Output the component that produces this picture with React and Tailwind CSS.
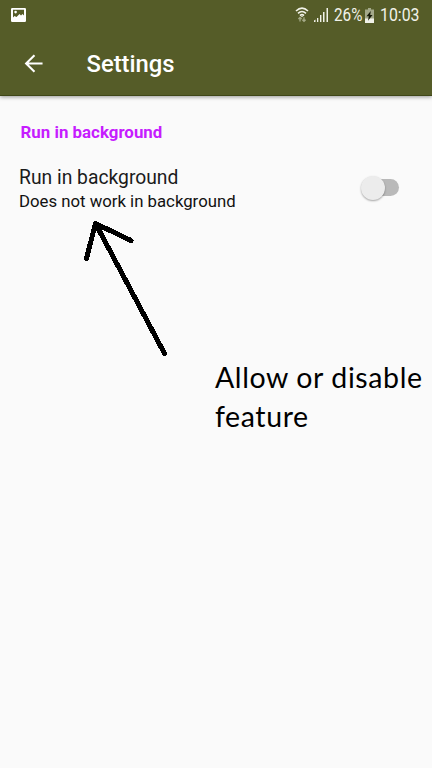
function StatusBar() {
  return (
    <div className="flex h-[30px] items-center text-[#f1f2e8]">
      <svg className="ml-[11px] h-[14px] w-[15px]" viewBox="0 0 15 14">
        <path fill="#fff" fillRule="evenodd" d="M1.2 0h12.6q1.2 0 1.2 1.2v11.6q0 1.2-1.2 1.2H1.2Q0 14 0 12.800V1.200Q0 0 1.200 0ZM2 1.800v7.700l1.500-1.500 2 1 3-3 1.500 1.500 1.500-1.500L13 7.500V1.800ZM4.600 2.800a1.300 1.300 0 1 1 0 2.600 1.300 1.300 0 1 1 0-2.600Z" />
      </svg>
      <svg className="ml-[269px] h-[16px] w-[14px]" viewBox="0 0 14 16" fill="none" stroke="#f1f2e8">
        <path strokeWidth="1.600" d="M1 4Q7-1.600 13 4M3 6.300Q7 2.700 11 6.300M5 8.600Q7 6.800 9 8.600" />
        <path fill="#f1f2e8" stroke="none" d="M5.800 8.900h2.400L7 10.300Z" />
        <path stroke="#a5aa88" strokeWidth="1.300" d="M5 14.500v-4M3.400 12 5 10.500 6.600 12M9 10.300v4M7.400 12.800 9 14.300l1.600-1.500" />
      </svg>
      <svg className="ml-[5px] h-[14px] w-[15px]" viewBox="0 0 15 14" fill="#f1f2e8">
        <path d="M0 12.500 1.500 11.500V14H0ZM3 10h1.300v4H3ZM6 7h1.400v7H6ZM9 4h1.500v10H9ZM12.500 0H14v14h-1.500Z" />
      </svg>
      <span className="ml-[4.500px] w-[29px] origin-left scale-x-[0.85] whitespace-nowrap text-[18px] leading-[30px]">26%</span>
      <svg className="ml-[2.500px] h-[15px] w-[9px]" viewBox="0 0 9 15">
        <path fill="#a4a98a" d="M3 0h3v1.500h3V15H0V1.500h3Z" />
        <path fill="#f1f2e8" d="M0 10.500h9V15H0Z" />
        <path fill="#161a08" d="M5.800 3 1.500 8.300h2.300L3 12.800 7.500 7H5.200Z" />
      </svg>
      <span className="ml-[6px] w-[40px] origin-left scale-x-[0.88] whitespace-nowrap text-[18px] leading-[30px]">10:03</span>
    </div>
  );
}

function Toggle() {
  return (
    <div className="mt-[14px] flex h-[17px] w-[36px] items-center rounded-full bg-[#b9b9b9]">
      <div className="-ml-[2px] size-[24px] shrink-0 rounded-full bg-[#ececec] shadow-[0_1px_2px_rgba(0,0,0,0.35)]" />
    </div>
  );
}

export default function App() {
  return (
    <div className="relative h-[768px] w-[432px] overflow-hidden bg-[#fafafa] font-['Roboto',sans-serif]">
      <header className="h-[96px] border-b border-[#3f4718] bg-[#555c28] shadow-[0_1px_4px_rgba(0,0,0,0.4)]">
        <StatusBar />
        <div className="flex h-[66px] items-center">
          <svg className="ml-[24px] h-[19px] w-[20px]" viewBox="0 0 20 20" fill="none" stroke="#fff" strokeWidth="2.200">
            <path d="M19 10H2M10.500 1.200 1.700 10l8.800 8.800" />
          </svg>
          <h1 className="ml-[42.500px] pt-[2px] text-[23.800px] font-medium leading-[30px] text-white">Settings</h1>
        </div>
      </header>
      <main className="pl-[19px]">
        <h2 className="pl-[1.500px] pt-[25px] text-[16.900px] font-bold leading-[22px] text-[#c61cff]">Run in background</h2>
        <div className="flex pt-[22px]">
          <div className="w-[344px]">
            <p className="pt-px text-[19.300px] leading-[24px] text-[#1b1b1b]">Run in background</p>
            <p className="-mt-px text-[16.750px] leading-[24px] text-[#111]">Does not work in background</p>
          </div>
          <Toggle />
        </div>
      </main>
      <svg className="absolute left-[80px] top-[215px] h-[145px] w-[90px]" viewBox="80 215 90 145" fill="none" stroke="#000" strokeWidth="5" strokeLinecap="round" strokeLinejoin="round" shapeRendering="crispEdges">
        <path d="M164.500 353.500 95.500 223.500M86.500 258.500l9-35 35.500 17" />
      </svg>
      <p className="absolute left-[215px] top-[358px] whitespace-nowrap font-['Lato',sans-serif] text-[28.500px] leading-[39px] tracking-[0.600px] text-black">
        Allow or disable<br />feature
      </p>
    </div>
  );
}
